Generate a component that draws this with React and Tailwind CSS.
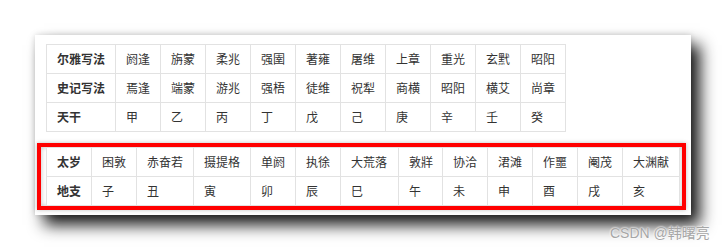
import React from 'react';

// 干支对照表
const rowsTop = [
  ['尔雅写法', '阏逢', '旃蒙', '柔兆', '强圉', '著雍', '屠维', '上章', '重光', '玄黓', '昭阳'],
  ['史记写法', '焉逢', '端蒙', '游兆', '强梧', '徒维', '祝犁', '商横', '昭阳', '横艾', '尚章'],
  ['天干', '甲', '乙', '丙', '丁', '戊', '己', '庚', '辛', '壬', '癸'],
];

const rowsBottom = [
  ['太岁', '困敦', '赤奋若', '摄提格', '单阏', '执徐', '大荒落', '敦牂', '协洽', '涒滩', '作噩', '阉茂', '大渊献'],
  ['地支', '子', '丑', '寅', '卯', '辰', '巳', '午', '未', '申', '酉', '戌', '亥'],
];

const Cell = ({ children, head }) => (
  <div
    className={`h-[29px] border-r border-b border-[#e2e2e2] pl-[10px] flex items-center text-[12px] text-[#333] whitespace-nowrap ${
      head ? 'font-bold' : ''
    }`}
  >
    {children}
  </div>
);

const Table = ({ rows, cols }) => (
  <div className={`grid ${cols} border-l border-t border-[#e2e2e2] bg-white w-max`}>
    {rows.map((row, r) =>
      row.map((c, i) => (
        <Cell key={`${r}-${i}`} head={i === 0}>
          {c}
        </Cell>
      ))
    )}
  </div>
);

export default function App() {
  return (
    <div
      className="relative w-[726px] h-[250px] bg-white overflow-hidden"
      style={{ fontFamily: '"Noto Sans CJK SC", "Noto Sans", sans-serif' }}
    >
      <div className="ml-[35px] mt-[35px] w-[656px] h-[180px] bg-white shadow-[0_0_6px_rgba(0,0,0,0.15),9px_10px_15px_rgba(0,0,0,0.9)] flex flex-col">
        <div className="ml-[11px] mt-[9px]">
          <Table rows={rowsTop} cols="grid-cols-[69px_repeat(10,45px)]" />
        </div>
        <div className="ml-[2px] mt-[11px] w-[649px] h-[67px] border-4 border-[#ff0000] bg-white pl-[5px] shadow-[0_0_4px_rgba(0,0,0,0.25),inset_0_0_5px_rgba(0,0,0,0.25)]">
          <Table
            rows={rowsBottom}
            cols="grid-cols-[45px_45px_57px_57px_45px_45px_58px_44px_45px_45px_45px_45px_57px]"
          />
        </div>
      </div>
      <div
        className="absolute left-[610px] top-[223px] text-[14px] text-[#a6a6a6] whitespace-nowrap"
        style={{ fontFamily: '"Liberation Sans", "Noto Sans CJK SC", sans-serif', textShadow: '0 0 2px #fff, 0 0 2px #fff' }}
      >
        CSDN @韩曙亮
      </div>
    </div>
  );
}
